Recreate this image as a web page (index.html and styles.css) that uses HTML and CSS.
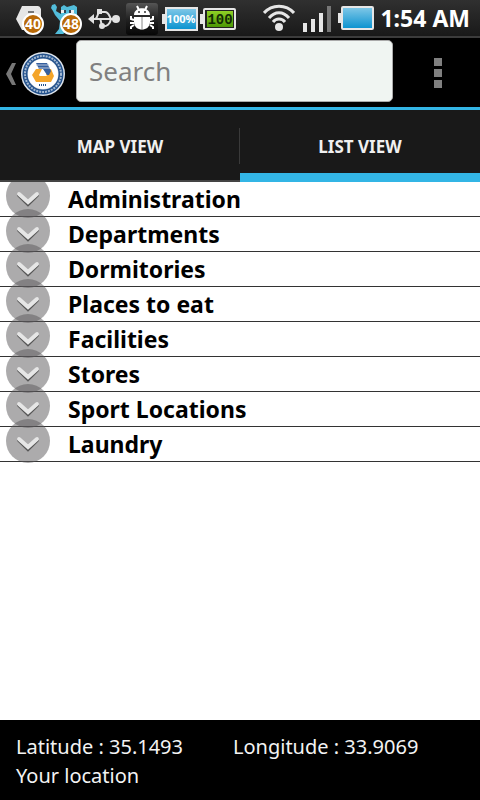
FILE: index.html
```html
<!DOCTYPE html>
<html lang="en">
<head>
<meta charset="utf-8">
<meta name="viewport" content="width=device-width, initial-scale=1">
<title>Campus Map</title>
<link rel="stylesheet" href="styles.css">
</head>
<body>
<div class="status">
  <div class="status-left">
    <svg class="notice" width="30" height="34" viewBox="0 0 30 34"><path d="M6 4H22Q24 4 25 7V28H6L0 17Z" fill="#e6e6e6"/><path d="M12 9h6v2h-6z" fill="#777"/><circle cx="17" cy="22" r="10" fill="#b96a08" stroke="#fff" stroke-width="2"/><text x="17" y="27" class="badge">40</text></svg>
    <svg class="notice" width="32" height="34" viewBox="0 0 32 34"><path d="M10 5L13 3L16 5L23 3L26 5V20L18 28L12 32H4L8 27L9 19L4 13L2 9L0 6L1 3L4 2L6 5L5 9L10 12Z" fill="#52bddb"/><path d="M10 8h5v3h-5zM18 8h5v3h-5z" fill="#eee"/><path d="M13 8h2v3h-2zM18 8h2v3h-2z" fill="#345"/><circle cx="20" cy="22" r="10" fill="#b96a08" stroke="#fff" stroke-width="2"/><text x="20" y="27" class="badge">48</text></svg>
    <svg class="usb" width="32" height="24" viewBox="0 0 32 24" fill="none" stroke="#e2e2e2" stroke-width="2"><path d="M4 12H27M7 12C10 12 9 5 12 5M12 12C14 14 12 19 16 19"/><path d="M0 12L6 7V17Z" fill="#e2e2e2" stroke="none"/><path d="M9 2h5v5h-5z" fill="#e2e2e2" stroke="none"/><circle cx="14" cy="19" r="3" fill="#e2e2e2" stroke="none"/><circle cx="28" cy="12" r="4" fill="#e2e2e2" stroke="none"/><path d="M13 5H17C21 5 21 9 23 12M14 19C19 20 22 17 23 12"/></svg>
    <svg class="droid" width="32" height="32" viewBox="0 0 32 32"><defs><linearGradient id="tile" x2="0" y2="1"><stop stop-color="#555"/><stop offset=".5" stop-color="#222"/><stop offset="1" stop-color="#060606"/></linearGradient></defs><rect width="32" height="32" rx="3" fill="url(#tile)"/><path d="M8 12C8 3 24 3 24 12ZM8 14H24V19C24 29 8 29 8 19Z" fill="#fff"/><path d="M11 3L13 7M21 3L19 7M8 17L5 16V13M24 17L27 16V13M8 20H4M24 20H28M8 22L5 24V26M24 22L27 24V26" fill="none" stroke="#fff" stroke-width="2"/><path d="M16 14V26" stroke="#888"/><circle cx="13" cy="9" r="1" fill="#333"/><circle cx="19" cy="9" r="1" fill="#333"/></svg>
    <svg class="cell" width="36" height="26" viewBox="0 0 36 26"><defs><linearGradient id="blue" x2="0" y2="1"><stop stop-color="#83c9e8"/><stop offset="1" stop-color="#0791cf"/></linearGradient></defs><path d="M0 8H3V18H0Z" fill="#e6e6e6"/><rect x="4" y="2" width="31" height="22" fill="url(#blue)" stroke="#e6e6e6" stroke-width="2"/><text x="19" y="17" class="percent">100%</text></svg>
    <svg class="cell" width="37" height="26" viewBox="0 0 37 26"><defs><linearGradient id="green" x2="0" y2="1"><stop stop-color="#8fd025"/><stop offset="1" stop-color="#4c9806"/></linearGradient></defs><path d="M0 8H3V18H0Z" fill="#e6e6e6"/><rect x="4" y="3" width="31" height="20" rx="1" fill="#222" stroke="#e6e6e6" stroke-width="2"/><rect x="7" y="5" width="26" height="16" fill="url(#green)"/><text x="20" y="18" class="charge">100</text></svg>
  </div>
  <div class="status-right">
    <svg width="32" height="28" viewBox="0 0 32 28" fill="none" stroke="#e6e6e6" stroke-width="3"><path d="M1 9C9 0 23 0 31 9M6 14C12 7 20 7 26 14M10 18C13 14 19 14 22 18"/><circle cx="16" cy="23" r="4" fill="#e6e6e6" stroke="none"/></svg>
    <svg class="signal" width="29" height="27" viewBox="0 0 29 27"><path d="M0 18h4v9H0zM8 14h4v13H8zM16 8h4v19h-4z" fill="#e6e6e6"/><path d="M24 1h4v26h-4z" fill="#777"/></svg>
    <svg class="power" width="36" height="26" viewBox="0 0 36 26"><path d="M0 8H3V18H0Z" fill="#e6e6e6"/><rect x="4" y="2" width="31" height="22" rx="1" fill="url(#blue)" stroke="#e6e6e6" stroke-width="2"/></svg>
    <span class="clock">1:54 AM</span>
  </div>
</div>
<header class="bar">
  <button class="home" aria-label="Back">
    <svg width="10" height="22" viewBox="0 0 10 22"><path d="M6 0H10L5 11L10 22H6L0 11Z" fill="#777"/></svg>
    <svg width="44" height="44" viewBox="0 0 44 44"><circle cx="22" cy="22" r="22" fill="#dfe5ec"/><circle cx="22" cy="22" r="18" fill="none" stroke="#24528c" stroke-width="5"/><circle cx="22" cy="22" r="18" fill="none" stroke="#a4b9d2" stroke-width="2" stroke-dasharray="2 1"/><circle cx="22" cy="22" r="15" fill="#fff"/><path d="M15 17H21L18 23H25L27 17H30L33 24L30 30H15L11 23Z" fill="#f4a52a"/><path d="M15 11H26L30 19L28 23H26L22 17H18Z" fill="#365f9d"/><path d="M15 13H28M17 16H29" stroke="#b8c7dd"/><path d="M22 18L26 24H18Z" fill="#fff"/><path d="M18 33H26" stroke="#24528c" stroke-width="2" stroke-dasharray="1 1"/></svg>
  </button>
  <input class="search" type="search" placeholder="Search" aria-label="Search">
  <button class="more" aria-label="More options"><svg width="8" height="30" viewBox="0 0 8 30"><path d="M0 0h8v8H0zM0 11h8v8H0zM0 22h8v8H0z" fill="#808080"/></svg></button>
</header>
<nav class="tabs">
  <button class="tab">MAP VIEW</button>
  <button class="tab active">LIST VIEW</button>
</nav>
<main class="content">
  <svg width="0" height="0" class="defs"><symbol id="expand" viewBox="0 0 44 44"><circle cx="22" cy="22" r="22" fill="#5a585a" fill-opacity=".5"/><path d="M13 21L22 30L31 21" fill="none" stroke="#555" stroke-width="4" stroke-linecap="round"/><path d="M13 20L22 28L31 20" fill="none" stroke="#e6e6e6" stroke-width="4" stroke-linecap="round"/></symbol></svg>
  <ul class="list">
    <li><button class="row"><svg class="expander"><use href="#expand"/></svg>Administration</button></li>
    <li><button class="row"><svg class="expander"><use href="#expand"/></svg>Departments</button></li>
    <li><button class="row"><svg class="expander"><use href="#expand"/></svg>Dormitories</button></li>
    <li><button class="row"><svg class="expander"><use href="#expand"/></svg>Places to eat</button></li>
    <li><button class="row"><svg class="expander"><use href="#expand"/></svg>Facilities</button></li>
    <li><button class="row"><svg class="expander"><use href="#expand"/></svg>Stores</button></li>
    <li><button class="row"><svg class="expander"><use href="#expand"/></svg>Sport Locations</button></li>
    <li><button class="row"><svg class="expander"><use href="#expand"/></svg>Laundry</button></li>
  </ul>
</main>
<footer class="location">
  <div class="coords"><span>Latitude : 35.1493</span><span>Longitude : 33.9069</span></div>
  <div>Your location</div>
</footer>
</body>
</html>
```
FILE: styles.css
```css
* { box-sizing: border-box; }
body {
  margin: 0;
  min-height: 100vh;
  display: flex;
  flex-direction: column;
  background: #fff;
  color: #000;
  font-family: "Noto Sans", "Open Sans", sans-serif;
}
button {
  margin: 0;
  padding: 0;
  border: 0;
  background: none;
  font: inherit;
  color: inherit;
}
svg { flex: none; display: block; }
.status {
  height: 38px;
  padding: 0 10px 0 16px;
  display: flex;
  justify-content: space-between;
  background: linear-gradient(#303030, #191919);
  border-bottom: 2px solid #3c3c3c;
  color: #fff;
}
.status-left, .status-right { display: flex; align-items: center; }
.status-left { padding-top: 1px; }
.notice { margin-right: 5px; }
.usb { margin-right: 6px; }
.droid { margin-right: 4px; }
.cell { margin-right: 2px; }
.badge, .percent, .charge { fill: #fff; text-anchor: middle; font-weight: 700; }
.badge { font-size: 14px; }
.percent { font-size: 11px; }
.charge { font-family: "Liberation Mono", monospace; font-size: 14px; fill: #122b05; }
.signal { margin-left: 8px; }
.power { margin-left: 6px; }
.clock { margin-left: 6px; font-size: 23px; font-weight: 700; line-height: 38px; white-space: nowrap; }
.bar {
  height: 72px;
  padding: 1px 0 5px;
  display: flex;
  align-items: center;
  background: #000;
  border-bottom: 3px solid #33b5e5;
}
.home { width: 76px; padding: 7px 0 0 6px; display: flex; align-items: center; gap: 5px; }
.search {
  flex: 1;
  min-width: 0;
  height: 62px;
  padding: 0 12px;
  border: 1px solid #aaa;
  border-radius: 5px;
  background: #f0f5f2;
  font: 26px/36px "Noto Sans", "Open Sans", sans-serif;
  color: #222;
}
.search::placeholder { color: #808080; opacity: 1; }
.more { width: 87px; height: 62px; display: flex; align-items: center; padding: 5px 0 0 41px; }
.tabs { height: 72px; display: flex; background: #191919; }
.tab {
  flex: 1;
  padding-top: 2px;
  border-bottom: 2px solid #444;
  background: linear-gradient(#3a3a3a, #3a3a3a) right 18px / 1px 36px no-repeat;
  color: #f0f0f0;
  font-size: 17px;
  font-weight: 700;
}
.tab.active { padding-top: 9px; border-bottom: 9px solid #33b5e5; background: none; }
.content { flex: 1; overflow: hidden; }
.defs { position: absolute; }
.list { margin: 0; padding: 0; list-style: none; }
.row {
  width: 100%;
  height: 35px;
  padding-left: 6px;
  display: flex;
  align-items: center;
  gap: 18px;
  border-bottom: 1px solid #333;
  font-size: 23px;
  font-weight: 700;
  line-height: 34px;
}
.expander { width: 44px; height: 44px; margin-top: -6px; }
.location {
  min-height: 80px;
  padding: 12px 16px 10px;
  background: #000;
  color: #f3f3f3;
  font-size: 20px;
  line-height: 29px;
}
.coords { display: flex; gap: 50px; }
```
